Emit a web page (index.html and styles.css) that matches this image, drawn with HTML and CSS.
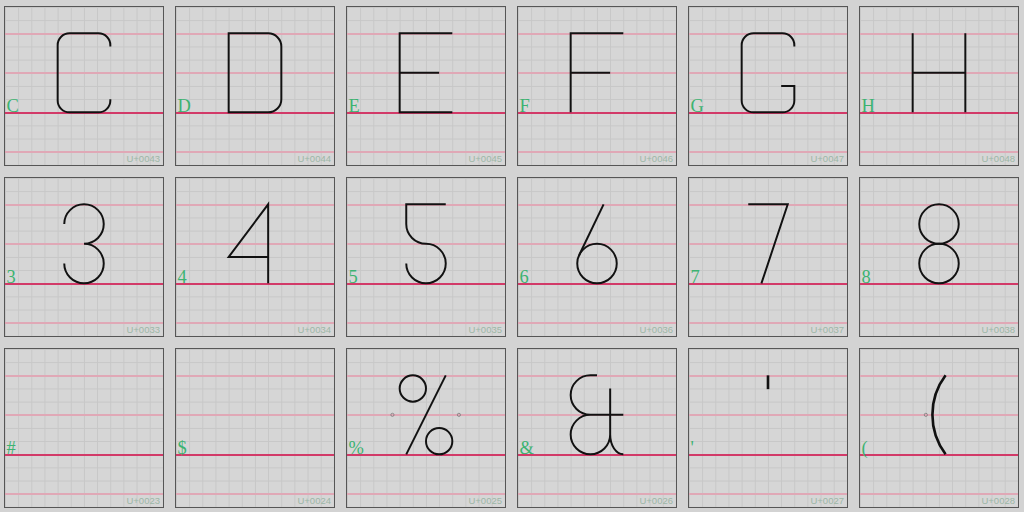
FILE: index.html
```html
<!doctype html>
<html lang="en">
    <head>
        <meta charset="UTF-8" />
        <title>Glyph sheet</title>
        <link rel="stylesheet" href="styles.css">
    </head>
    <body>
        <div class="sheet">
            <!-- row 1: capitals -->
            <div class="glyph">
                <svg viewBox="0 0 12 12"><text class="label" x="0.12" y="8">C</text>
                    <path class="stroke" d="M8,3 V2.9 A0.9,0.9 0 0 0 7.1,2 H4.9 A0.9,0.9 0 0 0 4,2.9 V7.1 A0.9,0.9 0 0 0 4.9,8 H7.1 A0.9,0.9 0 0 0 8,7.1 V7" /></svg>
                <span class="code">U+0043</span>
            </div>
            <div class="glyph">
                <svg viewBox="0 0 12 12"><text class="label" x="0.12" y="8">D</text>
                    <path class="stroke" d="M4,2 H7 A1,1 0 0 1 8,3 V7 A1,1 0 0 1 7,8 H4 Z" /></svg>
                <span class="code">U+0044</span>
            </div>
            <div class="glyph">
                <svg viewBox="0 0 12 12"><text class="label" x="0.12" y="8">E</text>
                    <path class="stroke" d="M8,2 H4 V8 H8 M4,5 H7" /></svg>
                <span class="code">U+0045</span>
            </div>
            <div class="glyph">
                <svg viewBox="0 0 12 12"><text class="label" x="0.12" y="8">F</text>
                    <path class="stroke" d="M8,2 H4 V8 M4,5 H7" /></svg>
                <span class="code">U+0046</span>
            </div>
            <div class="glyph">
                <svg viewBox="0 0 12 12"><text class="label" x="0.12" y="8">G</text>
                    <path class="stroke" d="M8,3 V2.9 A0.9,0.9 0 0 0 7.1,2 H4.9 A0.9,0.9 0 0 0 4,2.9 V7.1 A0.9,0.9 0 0 0 4.9,8 H7.1 A0.9,0.9 0 0 0 8,7.1 V6 H7" /></svg>
                <span class="code">U+0047</span>
            </div>
            <div class="glyph">
                <svg viewBox="0 0 12 12"><text class="label" x="0.12" y="8">H</text>
                    <path class="stroke" d="M4,2 V8 M8,2 V8 M4,5 H8" /></svg>
                <span class="code">U+0048</span>
            </div>

            <!-- row 2: digits -->
            <div class="glyph">
                <svg viewBox="0 0 12 12"><text class="label" x="0.12" y="8">3</text>
                    <path class="stroke" d="M4.5,3.5 A1.5,1.5 0 1 1 6,5 A1.5,1.5 0 1 1 4.5,6.5" /></svg>
                <span class="code">U+0033</span>
            </div>
            <div class="glyph">
                <svg viewBox="0 0 12 12"><text class="label" x="0.12" y="8">4</text>
                    <path class="stroke" d="M7,8 V2 L4,6 H7" /></svg>
                <span class="code">U+0034</span>
            </div>
            <div class="glyph">
                <svg viewBox="0 0 12 12"><text class="label" x="0.12" y="8">5</text>
                    <path class="stroke" d="M7.5,2 H4.5 V3.5 A1.5,1.5 0 0 0 6,5 A1.5,1.5 0 1 1 4.5,6.5" /></svg>
                <span class="code">U+0035</span>
            </div>
            <div class="glyph">
                <svg viewBox="0 0 12 12"><text class="label" x="0.12" y="8">6</text>
                    <circle class="stroke" cx="6" cy="6.5" r="1.5" />
                    <path class="stroke" d="M6.5,2 L4.65,5.85" /></svg>
                <span class="code">U+0036</span>
            </div>
            <div class="glyph">
                <svg viewBox="0 0 12 12"><text class="label" x="0.12" y="8">7</text>
                    <path class="stroke" d="M4.5,2 H7.5 L5.5,8" /></svg>
                <span class="code">U+0037</span>
            </div>
            <div class="glyph">
                <svg viewBox="0 0 12 12"><text class="label" x="0.12" y="8">8</text>
                    <circle class="stroke" cx="6" cy="3.5" r="1.5" />
                    <circle class="stroke" cx="6" cy="6.5" r="1.5" /></svg>
                <span class="code">U+0038</span>
            </div>

            <!-- row 3: punctuation -->
            <div class="glyph">
                <svg viewBox="0 0 12 12"><text class="label" x="0.12" y="8">#</text></svg>
                <span class="code">U+0023</span>
            </div>
            <div class="glyph">
                <svg viewBox="0 0 12 12"><text class="label" x="0.12" y="8">$</text></svg>
                <span class="code">U+0024</span>
            </div>
            <div class="glyph">
                <svg viewBox="0 0 12 12"><text class="label" x="0.12" y="8">%</text>
                    <circle class="stroke" cx="5" cy="3" r="1" />
                    <circle class="stroke" cx="7" cy="7" r="1" />
                    <path class="stroke" d="M7.5,2 L4.5,8" />
                    <circle class="marker" cx="3.45" cy="5" r="0.12" />
                    <circle class="marker" cx="8.5" cy="5" r="0.12" /></svg>
                <span class="code">U+0025</span>
            </div>
            <div class="glyph">
                <svg viewBox="0 0 12 12"><text class="label" x="0.12" y="8">&amp;</text>
                    <path class="stroke" d="M6,2 H5.5 A1.5,1.5 0 0 0 5.5,5 H8 M5.5,5 A1.5,1.5 0 1 0 7,6.5 M7,3 V6.5 A1,1.5 0 0 0 8,8" /></svg>
                <span class="code">U+0026</span>
            </div>
            <div class="glyph">
                <svg viewBox="0 0 12 12"><text class="label" x="0.12" y="8">'</text>
                    <path class="stroke bold" d="M6,2 V3.05" /></svg>
                <span class="code">U+0027</span>
            </div>
            <div class="glyph">
                <svg viewBox="0 0 12 12"><text class="label" x="0.12" y="8">(</text>
                    <path class="stroke bold" d="M6.5,2 A5,5 0 0 0 6.5,8" />
                    <circle class="marker" cx="5" cy="5" r="0.12" /></svg>
                <span class="code">U+0028</span>
            </div>
        </div>
    </body>
</html>
```

FILE: styles.css
```css
:root {
    --page: #d3d3d3;
    --paper: #d6d6d6;
    --grid: #c7c7c7;
    --guide: #e0a8b6;
    --baseline: #d23a68;
    --ink: #111;
    --label: #3cb371;
    --code: #9db7a7;
}

* {
    margin: 0;
    padding: 0;
    box-sizing: border-box;
}

body {
    background-color: var(--page);
    font-family: "Liberation Sans", Arial, sans-serif;
}

.sheet {
    display: grid;
    grid-template-columns: repeat(6, 160px);
    grid-auto-rows: 160px;
    gap: 11px;
    padding: 6px 4px;
}

/* one glyph cell: 12x12 design grid + guide lines */
.glyph {
    position: relative;
    border: 1px solid #565656;
    background:
        linear-gradient(var(--guide), var(--guide)) 0 26px / 100% 2px no-repeat,
        linear-gradient(var(--guide), var(--guide)) 0 65px / 100% 2px no-repeat,
        linear-gradient(var(--baseline), var(--baseline)) 0 104.5px / 100% 2px no-repeat,
        linear-gradient(var(--guide), var(--guide)) 0 144px / 100% 2px no-repeat,
        linear-gradient(to right, var(--grid) 1px, transparent 1px) 0 0 / calc(100% / 12) 100%,
        linear-gradient(to bottom, var(--grid) 1px, transparent 1px) 0 0 / 100% calc(100% / 12),
        var(--paper);
}

.glyph svg {
    display: block;
    width: 100%;
    height: 100%;
}

.label {
    font-family: "Liberation Serif", "Times New Roman", serif;
    font-size: 1.4px;
    fill: var(--label);
}

.stroke {
    fill: none;
    stroke: var(--ink);
    stroke-width: 0.15;
}

.stroke.bold {
    stroke-width: 0.2;
}

.marker {
    fill: none;
    stroke: #7a7a7a;
    stroke-width: 0.06;
}

.code {
    position: absolute;
    right: 3px;
    bottom: 1px;
    font-size: 9.5px;
    color: var(--code);
}
```
